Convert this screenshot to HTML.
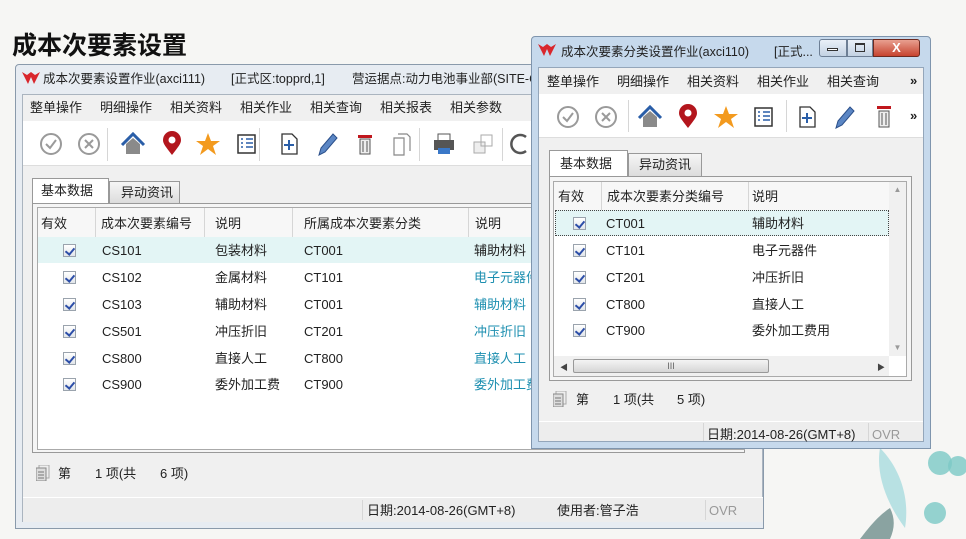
<!DOCTYPE html>
<html><head><meta charset="utf-8">
<style>
*{margin:0;padding:0;box-sizing:border-box}
body{width:966px;height:539px;overflow:hidden;background:#f6f6f4;font-family:"Liberation Sans","Noto Sans CJK SC",sans-serif;font-size:13px;line-height:16px;color:#222;position:relative}
.a{position:absolute;white-space:nowrap}
.win{position:absolute;background:#dfe6ee;border:1px solid #8a9aab;border-radius:4px 4px 0 0}
.cb{position:absolute;width:13px;height:13px;border:1px solid #9aa3ad;background:linear-gradient(#fff,#e2e6ea);}
.cb:after{content:"";position:absolute;left:3px;top:1px;width:4px;height:7px;border:solid #2c4ea8;border-width:0 2px 2px 0;transform:rotate(40deg)}
.teal{color:#1d8fb0}
.sep{position:absolute;width:1px;background:#d6d6d6}
</style></head><body>
<div class="a" style="left:12px;top:32px;font-size:25px;line-height:28px;font-weight:bold;color:#111">成本次要素设置</div>

<!-- LEFT WINDOW -->
<div class="win" style="left:15px;top:64px;width:749px;height:465px;background:#e7ecf2"></div>
<div class="a" style="left:22px;top:94px;width:741px;height:428px;background:#f0f0f0;border:1px solid #aab4bf"></div>
<svg class="a" style="left:22px;top:71px" width="18" height="14" viewBox="0 0 18 14"><path d="M0 1 L6 13 L9 6 L12 13 L18 1 L13 4 L9 1 L5 4Z" fill="#d9262c"/></svg>
<div class="a" style="left:43px;top:71px;font-size:12.5px">成本次要素设置作业(axci111)</div>
<div class="a" style="left:231px;top:71px;font-size:12.5px">[正式区:topprd,1]</div>
<div class="a" style="left:352px;top:71px;font-size:12.5px">营运据点:动力电池事业部(SITE-C</div>
<div class="a" style="left:23px;top:95px;width:740px;height:26px;background:#f0f0f0"></div>
<div class="a" style="left:30px;top:100px">整单操作</div><div class="a" style="left:100px;top:100px">明细操作</div><div class="a" style="left:170px;top:100px">相关资料</div><div class="a" style="left:240px;top:100px">相关作业</div><div class="a" style="left:310px;top:100px">相关查询</div><div class="a" style="left:380px;top:100px">相关报表</div><div class="a" style="left:450px;top:100px">相关参数</div>
<div class="a" style="left:23px;top:121px;width:740px;height:45px;background:#fff;border-bottom:1px solid #ddd"></div>
<div class="sep" style="left:107px;top:128px;height:33px"></div>
<div class="sep" style="left:259px;top:128px;height:33px"></div>
<div class="sep" style="left:419px;top:128px;height:33px"></div>
<div class="sep" style="left:502px;top:128px;height:33px"></div>
<svg class="a" style="left:38px;top:131px" width="490" height="28">
<g fill="none" stroke="#9a9a9a" stroke-width="2"><circle cx="13" cy="13" r="10"/><path d="M8 13l4 4 6-8"/><circle cx="51" cy="13" r="10"/><path d="M47 9l8 8M55 9l-8 8"/></g>
<path d="M84 14 L95 3 L106 14" fill="none" stroke="#2a5ea8" stroke-width="3"/><path d="M88 13 L95 7 L102 13 V23 H88Z" fill="#8a8a8a"/>
<path d="M134 24 C128 16 125 13 125 9 A9 9 0 0 1 143 9 C143 13 140 16 134 24Z" fill="#b3161d"/><circle cx="134" cy="9" r="3.5" fill="#fff"/>
<path d="M170 2 L173 10 L182 10 L175 15 L178 24 L170 18 L162 24 L165 15 L158 10 L167 10Z" fill="#f39a1e"/>
<rect x="200" y="4" width="17" height="18" fill="#fff" stroke="#333" stroke-width="1.5"/><path d="M203 8h2M203 12h2M203 16h2M208 8h7M208 12h7M208 16h7" stroke="#2a5ea8" stroke-width="1.5"/>
<path d="M244 3h10l5 5v15h-15z" fill="#fff" stroke="#333" stroke-width="1.3"/><path d="M251 9v10M246 14h10" stroke="#2a5ea8" stroke-width="2"/>
<path d="M281 24 L283 17 L295 3 L299 7 L287 21Z" fill="#5b86c4" stroke="#2a4f8a"/>
<rect x="320" y="4" width="14" height="3" fill="#c0171d"/><rect x="322" y="8" width="10" height="15" fill="#eee" stroke="#555"/><path d="M325 10v11M329 10v11" stroke="#555"/>
<path d="M356 7h10v17h-10z M360 3h9l3 3v14" fill="#fff" stroke="#888" stroke-width="1.2"/>
<rect x="400" y="3" width="12" height="7" fill="#fff" stroke="#555"/><rect x="396" y="9" width="20" height="10" fill="#555"/><rect x="400" y="17" width="12" height="6" fill="#3a78c8"/>
<rect x="436" y="11" width="11" height="11" fill="#eee" stroke="#aaa"/><rect x="443" y="4" width="11" height="11" fill="none" stroke="#aaa"/>
<path d="M488 6 A9 9 0 1 0 488 20" fill="none" stroke="#555" stroke-width="2.5"/>
</svg>
<div class="a" style="left:32px;top:178px;width:77px;height:26px;background:#fff;border:1px solid #999;border-bottom:none"></div>
<div class="a" style="left:41px;top:183px">基本数据</div>
<div class="a" style="left:109px;top:181px;width:71px;height:23px;background:linear-gradient(#f6f6f6,#dcdcdc);border:1px solid #999"></div>
<div class="a" style="left:121px;top:185px">异动资讯</div>
<div class="a" style="left:32px;top:203px;width:713px;height:250px;border:1px solid #999;background:#f5f5f5"></div>
<div class="a" style="left:37px;top:207px;width:708px;height:243px;background:#fff;border:1px solid #aaa"></div>
<div class="a" style="left:38px;top:208px;width:707px;height:29px;background:#f7f7f7"></div>
<div class="sep" style="left:95px;top:208px;height:29px"></div><div class="sep" style="left:204px;top:208px;height:29px"></div><div class="sep" style="left:292px;top:208px;height:29px"></div><div class="sep" style="left:468px;top:208px;height:29px"></div>
<div class="a" style="left:41px;top:216px">有效</div><div class="a" style="left:101px;top:216px">成本次要素编号</div><div class="a" style="left:215px;top:216px">说明</div><div class="a" style="left:304px;top:216px">所属成本次要素分类</div><div class="a" style="left:475px;top:216px">说明</div>
<div class="a" style="left:38px;top:237px;width:707px;height:26px;background:#e3f5f5"></div>
<div class="cb" style="left:63px;top:244px"></div><div class="a" style="left:102px;top:243px">CS101</div><div class="a" style="left:215px;top:243px">包装材料</div><div class="a" style="left:304px;top:243px">CT001</div><div class="a" style="left:474px;top:243px">辅助材料</div>
<div class="cb" style="left:63px;top:271px"></div><div class="a" style="left:102px;top:270px">CS102</div><div class="a" style="left:215px;top:270px">金属材料</div><div class="a" style="left:304px;top:270px">CT101</div><div class="a teal" style="left:474px;top:270px">电子元器件</div>
<div class="cb" style="left:63px;top:298px"></div><div class="a" style="left:102px;top:297px">CS103</div><div class="a" style="left:215px;top:297px">辅助材料</div><div class="a" style="left:304px;top:297px">CT001</div><div class="a teal" style="left:474px;top:297px">辅助材料</div>
<div class="cb" style="left:63px;top:325px"></div><div class="a" style="left:102px;top:324px">CS501</div><div class="a" style="left:215px;top:324px">冲压折旧</div><div class="a" style="left:304px;top:324px">CT201</div><div class="a teal" style="left:474px;top:324px">冲压折旧</div>
<div class="cb" style="left:63px;top:352px"></div><div class="a" style="left:102px;top:351px">CS800</div><div class="a" style="left:215px;top:351px">直接人工</div><div class="a" style="left:304px;top:351px">CT800</div><div class="a teal" style="left:474px;top:351px">直接人工</div>
<div class="cb" style="left:63px;top:378px"></div><div class="a" style="left:102px;top:377px">CS900</div><div class="a" style="left:215px;top:377px">委外加工费</div><div class="a" style="left:304px;top:377px">CT900</div><div class="a teal" style="left:474px;top:377px">委外加工费</div>
<svg class="a" style="left:36px;top:465px" width="14" height="16"><rect x="3" y="0" width="10" height="13" fill="#eee" stroke="#aaa"/><rect x="0" y="3" width="10" height="13" fill="#ddd" stroke="#888"/><path d="M2 7h6M2 10h6M2 13h6" stroke="#777"/></svg>
<div class="a" style="left:58px;top:466px">第</div><div class="a" style="left:95px;top:466px">1 项(共</div><div class="a" style="left:160px;top:466px">6 项)</div>
<div class="a" style="left:23px;top:497px;width:740px;height:25px;background:#ededed;border-top:1px solid #fff"></div>
<div class="sep" style="left:362px;top:500px;height:20px"></div><div class="sep" style="left:705px;top:500px;height:20px"></div>
<div class="a" style="left:367px;top:503px">日期:2014-08-26(GMT+8)</div><div class="a" style="left:557px;top:503px">使用者:管子浩</div>
<div class="a" style="left:709px;top:503px;color:#999">OVR</div>

<!-- leaves -->
<svg class="a" style="left:850px;top:448px" width="116" height="91">
<path d="M30 0 C50 20 60 50 55 80 C40 60 25 30 30 0Z" fill="#a9dcdf" opacity=".8"/>
<path d="M40 60 C25 70 15 85 10 91 L40 91 C45 80 45 70 40 60Z" fill="#6f8f8c" opacity=".8"/>
<circle cx="90" cy="15" r="12" fill="#7cc9c6" opacity=".8"/><circle cx="108" cy="18" r="10" fill="#7cc9c6" opacity=".8"/><circle cx="85" cy="65" r="11" fill="#7cc9c6" opacity=".8"/>
</svg>

<!-- RIGHT WINDOW -->
<div class="win" style="left:531px;top:36px;width:400px;height:413px;background:#c6d9ec;border-color:#7f95ad"></div>
<div class="a" style="left:538px;top:67px;width:386px;height:375px;background:#f0f0f0;border:1px solid #94a6ba"></div>
<svg class="a" style="left:538px;top:43px" width="18" height="14" viewBox="0 0 18 14"><path d="M0 1 L6 13 L9 6 L12 13 L18 1 L13 4 L9 1 L5 4Z" fill="#d9262c"/></svg>
<div class="a" style="left:561px;top:44px;font-size:12.5px">成本次要素分类设置作业(axci110)</div>
<div class="a" style="left:774px;top:44px;font-size:12.5px">[正式...</div>
<div class="a" style="left:819px;top:39px;width:28px;height:18px;border:1px solid #6d7f95;border-radius:3px 0 0 3px;background:linear-gradient(#e9f0f8,#c3d2e3)"></div>
<div class="a" style="left:827px;top:48px;width:11px;height:3px;border:1px solid #333;background:#fff"></div>
<div class="a" style="left:847px;top:39px;width:26px;height:18px;border:1px solid #6d7f95;background:linear-gradient(#e9f0f8,#c3d2e3)"></div>
<div class="a" style="left:855px;top:43px;width:10px;height:9px;border:1px solid #333;border-top-width:2px"></div>
<div class="a" style="left:873px;top:39px;width:47px;height:18px;border:1px solid #6d2a20;border-radius:0 3px 3px 0;background:linear-gradient(#e8a090,#c7432f);color:#fff;font-weight:bold;text-align:center;line-height:16px;font-size:13px">X</div>
<div class="a" style="left:547px;top:74px">整单操作</div><div class="a" style="left:617px;top:74px">明细操作</div><div class="a" style="left:687px;top:74px">相关资料</div><div class="a" style="left:757px;top:74px">相关作业</div><div class="a" style="left:827px;top:74px">相关查询</div>
<div class="a" style="left:910px;top:73px;font-weight:bold">»</div>
<div class="a" style="left:539px;top:94px;width:384px;height:44px;background:#fff;border-bottom:1px solid #ddd"></div>
<div class="sep" style="left:628px;top:100px;height:32px"></div><div class="sep" style="left:786px;top:100px;height:32px"></div>
<svg class="a" style="left:555px;top:104px" width="340" height="28">
<g fill="none" stroke="#9a9a9a" stroke-width="2"><circle cx="13" cy="13" r="10"/><path d="M8 13l4 4 6-8"/><circle cx="51" cy="13" r="10"/><path d="M47 9l8 8M55 9l-8 8"/></g>
<path d="M84 14 L95 3 L106 14" fill="none" stroke="#2a5ea8" stroke-width="3"/><path d="M88 13 L95 7 L102 13 V23 H88Z" fill="#8a8a8a"/>
<path d="M133 24 C127 16 124 13 124 9 A9 9 0 0 1 142 9 C142 13 139 16 133 24Z" fill="#b3161d"/><circle cx="133" cy="9" r="3.5" fill="#fff"/>
<path d="M171 2 L174 10 L183 10 L176 15 L179 24 L171 18 L163 24 L166 15 L159 10 L168 10Z" fill="#f39a1e"/>
<rect x="200" y="4" width="17" height="18" fill="#fff" stroke="#333" stroke-width="1.5"/><path d="M203 8h2M203 12h2M203 16h2M208 8h7M208 12h7M208 16h7" stroke="#2a5ea8" stroke-width="1.5"/>
<path d="M245 3h10l5 5v15h-15z" fill="#fff" stroke="#333" stroke-width="1.3"/><path d="M252 9v10M247 14h10" stroke="#2a5ea8" stroke-width="2"/>
<path d="M281 24 L283 17 L295 3 L299 7 L287 21Z" fill="#5b86c4" stroke="#2a4f8a"/>
<rect x="322" y="2" width="14" height="3" fill="#c0171d"/><rect x="324" y="7" width="10" height="16" fill="#eee" stroke="#555"/><path d="M327 9v12M331 9v12" stroke="#555"/>
</svg>
<div class="a" style="left:910px;top:108px;font-weight:bold">»</div>
<div class="a" style="left:549px;top:150px;width:79px;height:27px;background:#fff;border:1px solid #999;border-bottom:none"></div>
<div class="a" style="left:560px;top:156px">基本数据</div>
<div class="a" style="left:628px;top:153px;width:74px;height:24px;background:linear-gradient(#f6f6f6,#dcdcdc);border:1px solid #999"></div>
<div class="a" style="left:639px;top:157px">异动资讯</div>
<div class="a" style="left:549px;top:176px;width:363px;height:205px;border:1px solid #999;background:#f5f5f5"></div>
<div class="a" style="left:553px;top:181px;width:354px;height:196px;background:#fff;border:1px solid #aaa"></div>
<div class="a" style="left:554px;top:182px;width:335px;height:28px;background:#f7f7f7"></div>
<div class="sep" style="left:601px;top:182px;height:28px"></div><div class="sep" style="left:748px;top:182px;height:28px"></div>
<div class="a" style="left:558px;top:189px">有效</div><div class="a" style="left:607px;top:189px">成本次要素分类编号</div><div class="a" style="left:752px;top:189px">说明</div>
<div class="a" style="left:889px;top:182px;width:17px;height:174px;background:#f0f0f0;color:#999;font-size:8px;text-align:center">▲</div>
<div class="a" style="left:889px;top:340px;color:#999;font-size:8px;width:17px;text-align:center">▼</div>
<div class="a" style="left:555px;top:210px;width:334px;height:26px;background:#e3f5f5;border:1px dotted #444"></div>
<div class="cb" style="left:573px;top:217px"></div><div class="a" style="left:606px;top:216px">CT001</div><div class="a" style="left:752px;top:216px">辅助材料</div>
<div class="cb" style="left:573px;top:244px"></div><div class="a" style="left:606px;top:243px">CT101</div><div class="a" style="left:752px;top:243px">电子元器件</div>
<div class="cb" style="left:573px;top:271px"></div><div class="a" style="left:606px;top:270px">CT201</div><div class="a" style="left:752px;top:270px">冲压折旧</div>
<div class="cb" style="left:573px;top:298px"></div><div class="a" style="left:606px;top:297px">CT800</div><div class="a" style="left:752px;top:297px">直接人工</div>
<div class="cb" style="left:573px;top:324px"></div><div class="a" style="left:606px;top:323px">CT900</div><div class="a" style="left:752px;top:323px">委外加工费用</div>
<div class="a" style="left:554px;top:356px;width:335px;height:20px;background:#f0f0f0"></div>
<div class="a" style="left:573px;top:359px;width:196px;height:14px;border:1px solid #999;border-radius:2px;background:linear-gradient(#f4f4f4,#d6d6d6);text-align:center;font-size:9px;line-height:12px;color:#666">III</div>
<div class="a" style="left:560px;top:360px;font-size:8px;color:#444">◀</div><div class="a" style="left:877px;top:360px;font-size:8px;color:#444">▶</div>
<svg class="a" style="left:553px;top:391px" width="14" height="16"><rect x="3" y="0" width="10" height="13" fill="#eee" stroke="#aaa"/><rect x="0" y="3" width="10" height="13" fill="#ddd" stroke="#888"/><path d="M2 7h6M2 10h6M2 13h6" stroke="#777"/></svg>
<div class="a" style="left:576px;top:392px">第</div><div class="a" style="left:613px;top:392px">1 项(共</div><div class="a" style="left:677px;top:392px">5 项)</div>
<div class="a" style="left:539px;top:421px;width:384px;height:20px;background:#ededed;border-top:1px solid #fff"></div>
<div class="sep" style="left:703px;top:423px;height:18px"></div><div class="sep" style="left:868px;top:423px;height:18px"></div>
<div class="a" style="left:707px;top:427px;width:160px;overflow:hidden">日期:2014-08-26(GMT+8)</div>
<div class="a" style="left:872px;top:427px;color:#999">OVR</div>
</body></html>
